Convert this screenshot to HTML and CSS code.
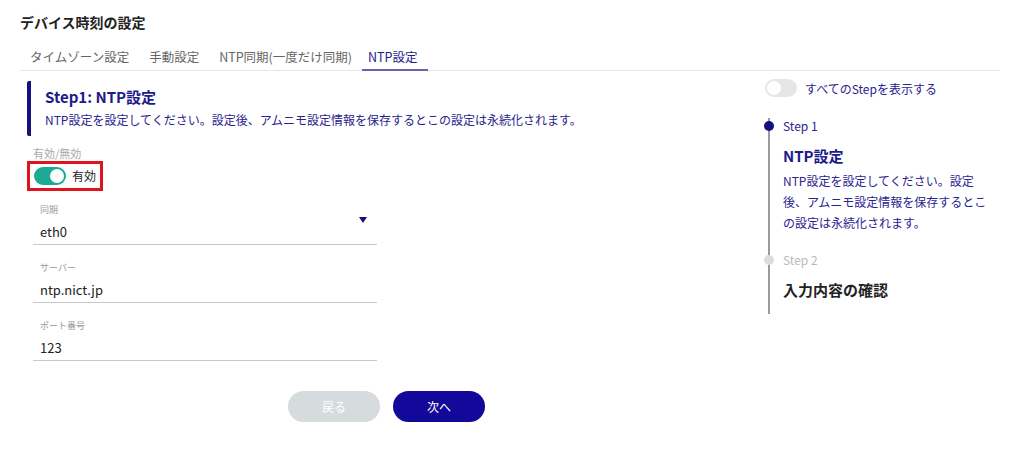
FILE: index.html
```html
<!DOCTYPE html>
<html lang="ja">
<head>
<meta charset="UTF-8">
<title>デバイス時刻の設定</title>
<link rel="stylesheet" href="styles.css">
</head>
<body>

<h2 class="page-title">デバイス時刻の設定</h2>

<div class="tabs">
  <div class="tab">タイムゾーン設定</div>
  <div class="tab">手動設定</div>
  <div class="tab">NTP同期(一度だけ同期)</div>
  <div class="tab active">NTP設定</div>
</div>

<div class="content">
  <div class="main">
    <div class="step-head">
      <h3>Step1: NTP設定</h3>
      <p>NTP設定を設定してください。設定後、アムニモ設定情報を保存するとこの設定は永続化されます。</p>
    </div>

    <div class="switch-label">有効/無効</div>
    <div class="switch-box">
      <span class="switch on"><span class="knob"></span></span>
      <span class="switch-text">有効</span>
    </div>

    <div class="field">
      <label>同期</label>
      <div class="value">eth0</div>
      <span class="arrow"></span>
    </div>
    <div class="field">
      <label>サーバー</label>
      <div class="value">ntp.nict.jp</div>
    </div>
    <div class="field">
      <label>ポート番号</label>
      <div class="value">123</div>
    </div>

    <div class="buttons">
      <button type="button" class="btn back">戻る</button>
      <button type="button" class="btn next">次へ</button>
    </div>
  </div>

  <div class="side">
    <div class="show-all">
      <span class="switch off"><span class="knob"></span></span>
      <span>すべてのStepを表示する</span>
    </div>
    <div class="steps">
      <div class="step current">
        <div class="step-no">Step 1</div>
        <div class="step-title">NTP設定</div>
        <div class="step-desc">NTP設定を設定してください。設定後、アムニモ設定情報を保存するとこの設定は永続化されます。</div>
      </div>
      <div class="step">
        <div class="step-no">Step 2</div>
        <div class="step-title">入力内容の確認</div>
      </div>
    </div>
  </div>
</div>

</body>
</html>
```

FILE: styles.css
```css
body {
  margin: 0;
  padding: 12px 20px 0 20px;
  font-family: "Noto Sans CJK JP", "Noto Sans", sans-serif;
  color: #222;
  background: #fff;
}
.page-title {
  margin: 0;
  font-size: 14px;
  font-weight: bold;
  line-height: 20px;
  color: #222;
}
.tabs {
  display: flex;
  margin-top: 13px;
  border-bottom: 1px solid #e6e6ea;
  margin-right: 4px;
}
.tab {
  padding: 0 10px;
  font-size: 12.5px;
  line-height: 24px;
  color: #666;
  border-bottom: 2px solid transparent;
  margin-bottom: -1px;
}
.tab.active {
  color: #1e1a8c;
  border-bottom-color: #6a63b0;
  padding: 0 10px 0 6px;
}
.content {
  display: flex;
  margin-top: 10px;
}
.main {
  width: 720px;
  padding-left: 7px;
}
.step-head {
  border-left: 4px solid #14107e;
  border-radius: 2px;
  padding: 5px 0 7px 14px;
}
.step-head h3 {
  margin: 0;
  font-size: 15px;
  line-height: 22px;
  color: #1e1a8c;
}
.step-head p {
  margin: 3px 0 0;
  font-size: 12px;
  line-height: 18px;
  color: #2a238f;
}
.switch-label {
  margin: 9px 0 0 6px;
  font-size: 11px;
  line-height: 16px;
  color: #aaa;
}
.switch-box {
  display: inline-flex;
  align-items: center;
  gap: 6px;
  padding: 3px 4px;
  border: 3px solid #e0141c;
}
.switch {
  position: relative;
  display: inline-block;
  width: 32px;
  height: 18px;
  border-radius: 9px;
}
.switch.on {
  background: #1aab92;
}
.switch.off {
  background: #e6e6e8;
}
.knob {
  position: absolute;
  top: 2px;
  width: 14px;
  height: 14px;
  border-radius: 50%;
  background: #fff;
}
.switch.on .knob {
  right: 2px;
}
.switch.off .knob {
  left: 2px;
}
.switch-text {
  font-size: 12px;
  line-height: 18px;
  color: #222;
}
.field {
  position: relative;
  width: 344px;
  margin-left: 6px;
  padding: 12px 0 3px 7px;
  border-bottom: 1px solid #c8c8c8;
  box-sizing: border-box;
}
.field + .field {
  margin-top: 4px;
}
.field label {
  display: block;
  font-size: 9px;
  line-height: 14px;
  color: #999;
}
.field .value {
  margin-top: 6px;
  font-size: 13px;
  line-height: 18px;
  color: #222;
}
.arrow {
  position: absolute;
  right: 10px;
  top: 26px;
  border-left: 4px solid transparent;
  border-right: 4px solid transparent;
  border-top: 6px solid #14107e;
}
.buttons {
  display: flex;
  gap: 13px;
  margin: 30px 0 0 261px;
}
.btn {
  width: 92px;
  height: 31px;
  border: none;
  border-radius: 16px;
  font-family: inherit;
  font-size: 12px;
  color: #fff;
}
.btn.back {
  background: #d6dcdd;
}
.btn.next {
  background: #12089a;
}
.side {
  padding-left: 18px;
  width: 230px;
}
.show-all {
  display: flex;
  align-items: center;
  gap: 8px;
  margin-top: -2px;
  font-size: 12px;
  color: #2a238f;
}
.steps {
  margin: 21px 0 0 3px;
  border-left: 2px solid #9a9a9a;
}
.step {
  position: relative;
  padding-left: 13px;
}
.step::before {
  content: "";
  position: absolute;
  left: -6px;
  top: 3px;
  width: 10px;
  height: 10px;
  border-radius: 50%;
  background: #ddd;
}
.step.current::before {
  background: #14107e;
}
.step + .step {
  margin-top: 19px;
  padding-bottom: 14px;
}
.step-no {
  font-size: 12px;
  line-height: 16px;
  color: #bbb;
}
.step.current .step-no {
  color: #2a238f;
}
.step-title {
  margin-top: 12px;
  font-size: 15px;
  font-weight: bold;
  line-height: 20px;
  color: #222;
}
.step.current .step-title {
  color: #1e1a8c;
}
.step-desc {
  margin-top: 4px;
  font-size: 12px;
  line-height: 21px;
  color: #2a238f;
}
```
